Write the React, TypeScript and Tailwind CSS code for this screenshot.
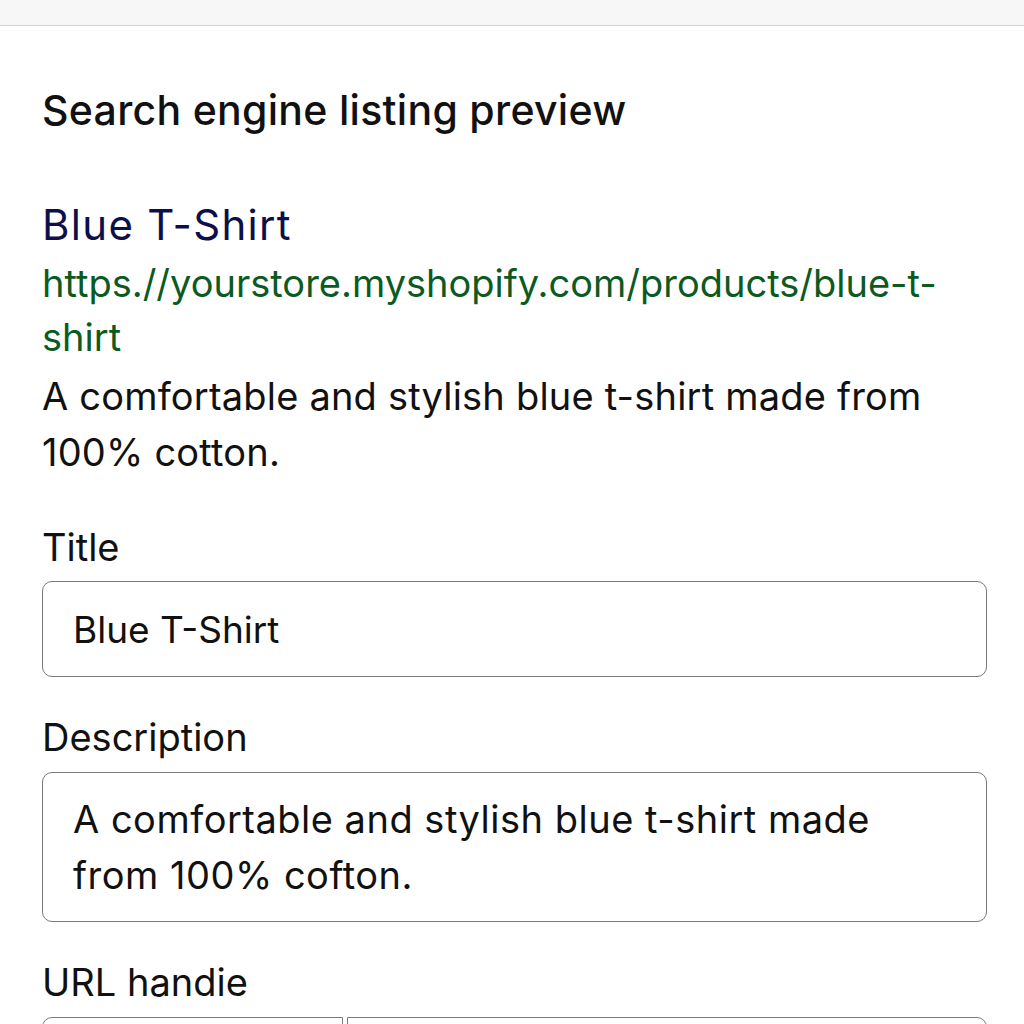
import React from "react";

const font = { fontFamily: "Inter, 'Noto Sans', sans-serif" };

export default function App() {
  return (
    <div className="min-h-screen bg-white text-[#111]" style={font}>
      <div className="h-[26px] bg-[#f7f7f7] border-b border-[#d4d4d4]" />
      <div className="pl-[42px] pr-[37px] pt-[62px]">
        <h2 className="text-[41px] leading-[44px] font-medium tracking-[0.3px]">
          Search engine listing preview
        </h2>

        <div className="mt-[69px] text-[42px] leading-[48px] tracking-[1.3px] text-[#0d0f4b]">
          Blue T-Shirt
        </div>
        <div className="mt-[7px] text-[38px] leading-[54px] text-[#0c5a22] break-words">
          https.//yourstore.myshopify.com/products/blue-t-
          <br />
          shirt
        </div>
        <p className="mt-[4px] text-[38px] leading-[56px] tracking-[0.2px]">
          A comfortable and stylish blue t-shirt made from
          <br />
          100% cotton.
        </p>

        <label className="block mt-[45px] text-[38px] leading-[44px]">Title</label>
        <input
          readOnly
          value="Blue T-Shirt"
          className="mt-[12px] w-full h-[96px] rounded-[10px] border border-[#7a7a7a] px-[30px] text-[37px] outline-none"
        />

        <label className="block mt-[38px] text-[38px] leading-[44px]">Description</label>
        <textarea
          readOnly
          value={"A comfortable and stylish blue t-shirt made\nfrom 100% cofton."}
          className="mt-[13px] block w-full h-[150px] resize-none rounded-[10px] border border-[#7a7a7a] px-[30px] pt-[18px] text-[38px] leading-[56px] tracking-[0.5px] outline-none overflow-hidden"
        />

        <label className="block mt-[38px] text-[38px] leading-[44px]">URL handie</label>
        <div className="mt-[13px] flex gap-[4px]">
          <div className="w-[301px] h-[96px] rounded-l-[10px] border border-[#7a7a7a]" />
          <div className="flex-1 h-[96px] rounded-r-[10px] border border-[#7a7a7a]" />
        </div>
      </div>
    </div>
  );
}
